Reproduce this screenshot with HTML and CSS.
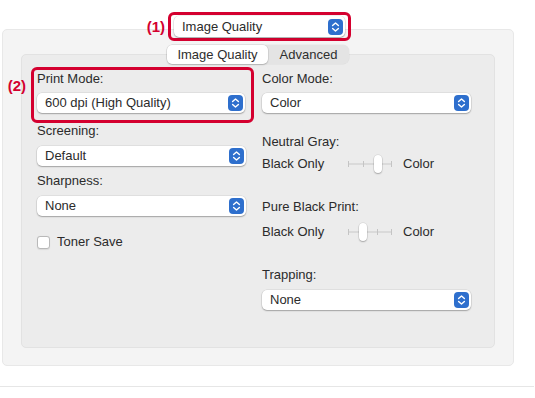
FILE: index.html
```html
<!DOCTYPE html>
<html lang="en">

<head>
    <meta charset="UTF-8">
    <title>Image Quality</title>
    <link rel="stylesheet" href="styles.css">
</head>

<body>

    <div class="pane">
        <div class="pane-head">
            <div class="callout callout-top">
                <span class="marker">(1)</span>
                <div class="popup popup-top">
                    <span class="popup-text">Image Quality</span>
                    <span class="stepper"><svg width="15" height="16" viewBox="0 0 15 16"><path d="M4.6 6.6 7.5 3.9 10.4 6.6M4.6 9.4 7.5 12.1 10.4 9.4" /></svg></span>
                </div>
            </div>
        </div>

        <div class="tabs">
            <div class="tab selected">Image Quality</div>
            <div class="tab">Advanced</div>
        </div>

        <div class="group">
            <div class="column">
                <div class="callout callout-mode">
                    <span class="marker marker-mode">(2)</span>
                    <div class="label">Print Mode:</div>
                    <div class="popup gap-sm">
                        <span class="popup-text">600 dpi (High Quality)</span>
                        <span class="stepper"><svg width="15" height="16" viewBox="0 0 15 16"><path d="M4.6 6.6 7.5 3.9 10.4 6.6M4.6 9.4 7.5 12.1 10.4 9.4" /></svg></span>
                    </div>
                </div>

                <div class="field">
                    <div class="label">Screening:</div>
                    <div class="popup gap-md">
                        <span class="popup-text">Default</span>
                        <span class="stepper"><svg width="15" height="16" viewBox="0 0 15 16"><path d="M4.6 6.6 7.5 3.9 10.4 6.6M4.6 9.4 7.5 12.1 10.4 9.4" /></svg></span>
                    </div>
                    <div class="label gap-md">Sharpness:</div>
                    <div class="popup gap-md">
                        <span class="popup-text">None</span>
                        <span class="stepper"><svg width="15" height="16" viewBox="0 0 15 16"><path d="M4.6 6.6 7.5 3.9 10.4 6.6M4.6 9.4 7.5 12.1 10.4 9.4" /></svg></span>
                    </div>
                    <label class="check">
                        <span class="box"></span>
                        <span>Toner Save</span>
                    </label>
                </div>
            </div>

            <div class="column column-right">
                <div class="label">Color Mode:</div>
                <div class="popup gap-sm">
                    <span class="popup-text">Color</span>
                    <span class="stepper"><svg width="15" height="16" viewBox="0 0 15 16"><path d="M4.6 6.6 7.5 3.9 10.4 6.6M4.6 9.4 7.5 12.1 10.4 9.4" /></svg></span>
                </div>

                <div class="label gap-lg">Neutral Gray:</div>
                <div class="slider-row gap-xs">
                    <span class="end">Black Only</span>
                    <div class="slider">
                        <span class="track"></span>
                        <span class="tick"></span><span class="tick"></span><span class="tick"></span><span class="tick"></span>
                        <span class="thumb" style="left: 29px"></span>
                    </div>
                    <span>Color</span>
                </div>

                <div class="label gap-xl">Pure Black Print:</div>
                <div class="slider-row gap-md">
                    <span class="end">Black Only</span>
                    <div class="slider">
                        <span class="track"></span>
                        <span class="tick"></span><span class="tick"></span><span class="tick"></span><span class="tick"></span>
                        <span class="thumb" style="left: 14.5px"></span>
                    </div>
                    <span>Color</span>
                </div>

                <div class="label gap-xl">Trapping:</div>
                <div class="popup gap-md">
                    <span class="popup-text">None</span>
                    <span class="stepper"><svg width="15" height="16" viewBox="0 0 15 16"><path d="M4.6 6.6 7.5 3.9 10.4 6.6M4.6 9.4 7.5 12.1 10.4 9.4" /></svg></span>
                </div>
            </div>
        </div>
    </div>

    <div class="divider"></div>

</body>

</html>
```

FILE: styles.css
```css
body {
    margin: 0;
    background: #fff;
    font-family: 'Liberation Sans', Arial, sans-serif;
    font-size: 13px;
    line-height: 16px;
    color: #2b2b2b;
}

.pane {
    margin: 29px 21px 0 2px;
    padding: 0 18px 17px 18px;
    background: #f4f4f4;
    border: 1px solid #e8e8e8;
    border-radius: 5px;
}

.pane-head {
    display: flex;
    justify-content: center;
    margin-top: -18px;
    padding-left: 3px;
}

.callout {
    position: relative;
    border: 3px solid #d4002f;
    border-radius: 6px;
}

.callout-top {
    width: 177px;
    padding: 1px 0;
    display: flex;
    justify-content: center;
}

.marker {
    position: absolute;
    right: calc(100% + 6px);
    top: 4px;
    color: #d4002f;
    font-weight: bold;
    font-size: 15px;
}

.marker-mode {
    top: 8px;
    right: calc(100% + 8px);
}

.popup {
    display: flex;
    align-items: center;
    height: 20px;
    padding: 0 2px 0 8px;
    background: #fff;
    border-radius: 5px;
    box-shadow: 0 0 0 0.5px rgba(0, 0, 0, 0.1), 0 1px 1.5px rgba(0, 0, 0, 0.28);
}

.popup-top {
    width: 161px;
    height: 21px;
}

.popup-text {
    flex: 1;
}

.stepper {
    display: flex;
    width: 15px;
    height: 16px;
    background: #2e6fcd;
    border-radius: 4px;
}

.stepper path {
    fill: none;
    stroke: #fff;
    stroke-width: 1.4;
    stroke-linecap: round;
    stroke-linejoin: round;
}

.tabs {
    position: relative;
    z-index: 1;
    display: flex;
    width: 182px;
    height: 19px;
    margin: 4px auto -10px auto;
    background: #e4e4e4;
    border-radius: 6px;
    box-shadow: 0 0 0 0.5px rgba(0, 0, 0, 0.06);
}

.tab {
    display: flex;
    align-items: center;
    justify-content: center;
    flex: 1;
    color: #2e2e2e;
}

.tab.selected {
    flex: 0 0 101px;
    background: #fff;
    border-radius: 5px;
    box-shadow: 0 0 0 0.5px rgba(0, 0, 0, 0.1), 0 1px 1.5px rgba(0, 0, 0, 0.18);
}

.group {
    display: grid;
    grid-template-columns: 223px 209px;
    column-gap: 8px;
    padding: 12px 0 37px 9px;
    background: #ececec;
    border: 1px solid #e2e2e2;
    border-radius: 5px;
}

.column {
    display: flex;
    flex-direction: column;
}

.callout-mode {
    padding: 1px 6px 7px 3px;
}

.field {
    display: flex;
    flex-direction: column;
    padding: 0 8px 0 6px;
}

.column-right {
    padding-top: 4px;
}

.label {
    height: 16px;
}

.gap-xs {
    margin-top: 4px;
}

.gap-sm {
    margin-top: 6px;
}

.gap-md {
    margin-top: 7px;
}

.gap-lg {
    margin-top: 21px;
}

.gap-xl {
    margin-top: 25px;
}

.check {
    display: flex;
    align-items: center;
    gap: 7px;
    margin-top: 18px;
}

.box {
    width: 11px;
    height: 11px;
    background: #fff;
    border: 0.5px solid #b9b9b9;
    border-radius: 3px;
    box-shadow: 0 0.5px 1px rgba(0, 0, 0, 0.08);
}

.slider-row {
    display: flex;
    align-items: center;
    height: 20px;
}

.end {
    width: 86px;
}

.slider {
    position: relative;
    width: 44px;
    height: 20px;
    margin-right: 11px;
}

.track {
    position: absolute;
    left: 0;
    right: 0;
    top: 9px;
    height: 2px;
    background: #dadada;
}

.tick {
    position: absolute;
    top: 7px;
    width: 1px;
    height: 6px;
    background: #c4c4c4;
}

.tick:nth-child(2) { left: 0; }
.tick:nth-child(3) { left: 14.5px; }
.tick:nth-child(4) { left: 29px; }
.tick:nth-child(5) { left: 43px; }

.thumb {
    position: absolute;
    top: 1px;
    width: 8px;
    height: 18px;
    margin-left: -3.5px;
    background: #fff;
    border-radius: 4px;
    box-shadow: 0 0 0 0.5px rgba(0, 0, 0, 0.12), 0 1px 1.5px rgba(0, 0, 0, 0.25);
}

.divider {
    height: 1px;
    margin: 20px 1px 0 0;
    background: #e6e6e6;
}
```
